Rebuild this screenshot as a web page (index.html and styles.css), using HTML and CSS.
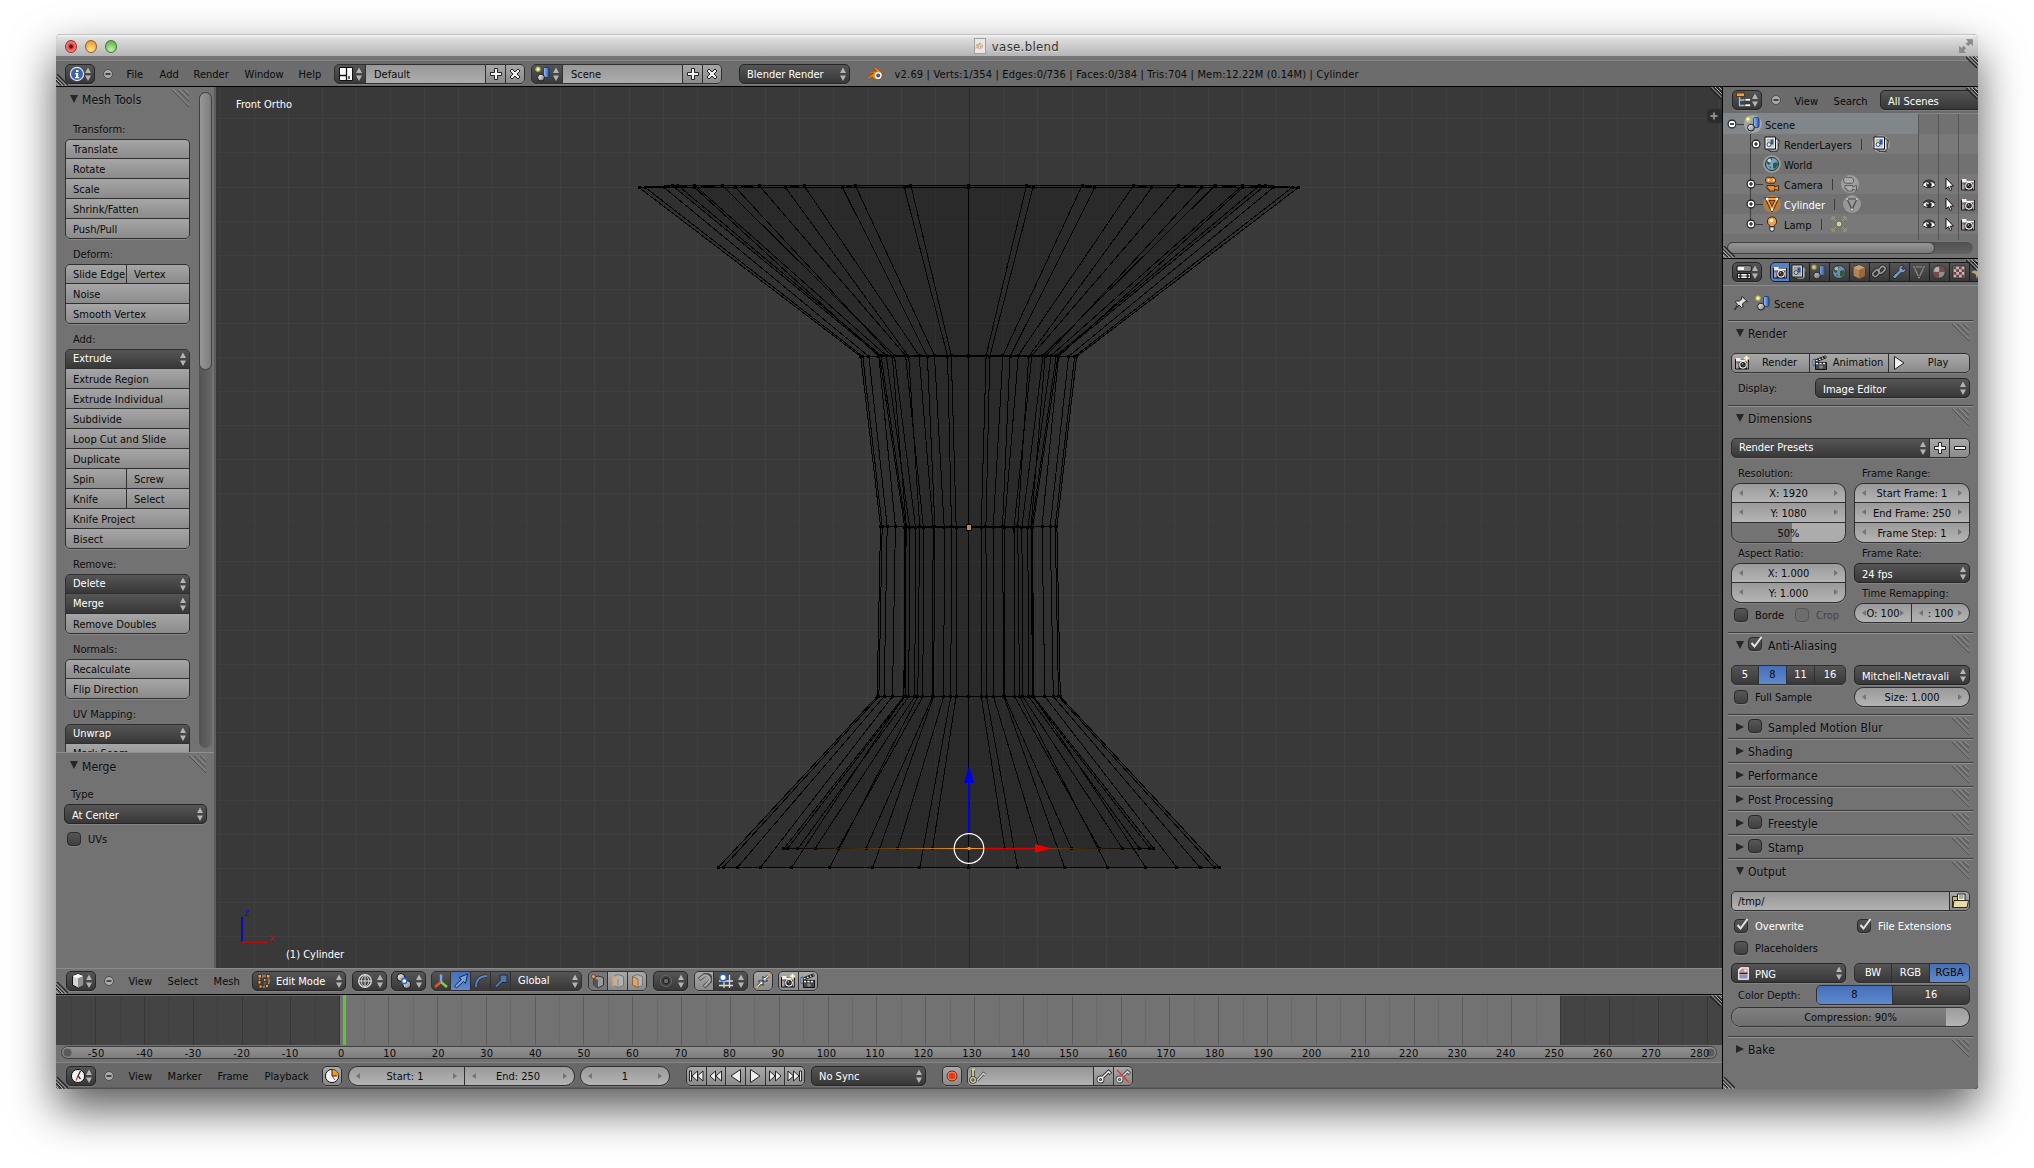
FILE: index.html
```html
<!DOCTYPE html>
<html lang="en">
<head>
<meta charset="utf-8">
<title>vase.blend</title>
<link rel="stylesheet" href="styles.css">
</head>
<body>
<svg class="defs" aria-hidden="true">
  <defs>
    <linearGradient id="gBall" x1="0" y1="0" x2="1" y2="1"><stop offset="0" stop-color="#fff"/><stop offset="1" stop-color="#777"/></linearGradient>
    <linearGradient id="gBlue" x1="0" y1="0" x2="1" y2="0"><stop offset="0" stop-color="#9cc3f5"/><stop offset="1" stop-color="#2757b5"/></linearGradient>
    <symbol id="ud" viewBox="0 0 6 14"><path d="M0 6 3 .5 6 6ZM0 8.5h6L3 14Z" fill="#b4b4b4"/></symbol>
    <symbol id="minus" viewBox="0 0 10 10"><circle cx="5" cy="5" r="4.5" fill="#ababab" stroke="#4d4d4d"/><path d="M2.5 5h5" stroke="#222" stroke-width="1.4"/></symbol>
    <symbol id="expand" viewBox="0 0 10 10"><circle cx="5" cy="5" r="3.9" fill="#fff" stroke="#111" stroke-width="1.1"/><path d="M3 5h4M5 3v4" stroke="#111" stroke-width="1.2"/></symbol>
    <symbol id="collapse" viewBox="0 0 10 10"><circle cx="5" cy="5" r="3.9" fill="#fff" stroke="#111" stroke-width="1.1"/><path d="M3 5h4" stroke="#111" stroke-width="1.3"/></symbol>
    <symbol id="info" viewBox="0 0 16 16"><circle cx="8" cy="8" r="6.6" fill="#3d64a8" stroke="#dfe6f2" stroke-width="1.2"/><path d="M7 4h2.4v2H7ZM6.2 7h3v4h1v1.2H6V11h1V8.2h-.8Z" fill="#fff"/></symbol>
    <symbol id="layout" viewBox="0 0 16 16"><path d="M1.5 1.5h13v13h-13Z" fill="#fff" stroke="#111"/><path d="M8.5 1.5v13M1.5 9.5h7M11 10v3" stroke="#111" stroke-width="1.3"/></symbol>
    <symbol id="plus" viewBox="0 0 16 16"><path d="M6.5 2.5h3v4h4v3h-4v4h-3v-4h-4v-3h4Z" fill="#f2f2f2" stroke="#222"/></symbol>
    <symbol id="dash" viewBox="0 0 16 16"><path d="M2.5 6.5h11v3h-11Z" fill="#f2f2f2" stroke="#222"/></symbol>
    <symbol id="cross" viewBox="0 0 16 16"><path d="M3 5 5 3l3 3 3-3 2 2-3 3 3 3-2 2-3-3-3 3-2-2 3-3Z" fill="#eee" stroke="#222"/></symbol>
    <symbol id="scene" viewBox="0 0 16 16"><path d="M8.5 2.5c0-1.4 5.5-1.4 5.5 0v8c0 1.5-5.5 1.5-5.5 0Z" fill="url(#gBlue)" stroke="#1c2c4c" stroke-width=".8"/><circle cx="6" cy="11.6" r="3.4" fill="url(#gBall)" stroke="#111" stroke-width=".9"/><circle cx="3" cy="3.2" r="2.6" fill="#d9d45a" opacity=".8"/><circle cx="3" cy="3.2" r="1.2" fill="#ffffc8"/></symbol>
    <symbol id="blender" viewBox="0 0 18 16"><path d="M8.2 1 15 6.2a5.3 5.3 0 1 1-9.6 4.6L1.5 13 .4 11.8 7 7H2.4V5.2h7.4L7.2 2.4Z" fill="#f0891d" stroke="#7e4106" stroke-width=".6"/><circle cx="11.2" cy="9.6" r="3.4" fill="#fff"/><circle cx="11.2" cy="9.6" r="2" fill="#2a5fa8"/></symbol>
    <symbol id="layers" viewBox="0 0 16 16"><path d="M6.5 5.500 15.500 4.500 13 15.500H6Z" fill="#eee" stroke="#222" stroke-width=".8"/><path d="M4 3h10v11H4Z" fill="#e5e5e5" stroke="#222" stroke-width=".8"/><path d="M1 1h10.500v12H1Z" fill="#fff" stroke="#111"/><path d="M2.500 2.500h7.500v9H2.500Z" fill="#b9cbea"/><path d="M6.500 3.500H9.500v5H6.500Z" fill="#2b58ae"/><circle cx="5" cy="8.500" r="1.900" fill="#fff" stroke="#111" stroke-width=".7"/><path d="M3 3h2v2H3Z" fill="#e5b62c"/></symbol>
    <symbol id="world" viewBox="0 0 16 16"><circle cx="8" cy="8" r="6.500" fill="#7ba4cc" stroke="#1c2a3a"/><path d="M4 4c2-2 4-1.500 4.500-1l-1 2-2 1 1 2-2 1-2-2Z M9 7l4-1 1 3-3 4-2-1Z M5 10l2 1-.5 2Z" fill="#2f5f33"/><circle cx="5.500" cy="4.500" r="1.800" fill="#fff" opacity=".75"/></symbol>
    <symbol id="moviecam" viewBox="0 0 16 16"><path d="M3 9.500h7.500v1.500l4-1.500v5l-4-1.500v2H5v-2H3Z M1.500 4a3 3 0 0 1 5-2.200 3 3 0 1 1 3.700 5.500H4.500A3 3 0 0 1 1.500 4Z" fill="#e78b35" stroke="#3f2208" stroke-width=".9"/><circle cx="4.600" cy="4.200" r="1.100" fill="#fff0dd"/><circle cx="9.600" cy="4.200" r="1.100" fill="#fff0dd"/></symbol>
    <symbol id="camdata" viewBox="0 0 16 16"><path d="M3 9.500h7.500v1.500l4-1.500v5l-4-1.500v2H5v-2H3Z M1.500 4a3 3 0 0 1 5-2.200 3 3 0 1 1 3.700 5.500H4.500A3 3 0 0 1 1.500 4Z" fill="#aaa" stroke="#555" stroke-width=".9"/></symbol>
    <symbol id="mesh" viewBox="0 0 16 16"><path d="M3 3h10L8 13.500Z" fill="none" stroke="#4a2505" stroke-width="3.600"/><path d="M3 3h10L8 13.500Z" fill="none" stroke="#f7a04a" stroke-width="1.800"/><path d="M1.800 1.800h2.400v2.400H1.800ZM11.800 1.800h2.400v2.400h-2.400ZM6.800 12.300h2.400v2.400H6.800Z" fill="#fff"/></symbol>
    <symbol id="meshdata" viewBox="0 0 16 16"><path d="M3 3h10L8 13.500Z" fill="none" stroke="#4c4c4c" stroke-width="1.200"/><path d="M1.800 1.800h2.400v2.400H1.800ZM11.800 1.800h2.400v2.400h-2.400ZM6.800 12.300h2.400v2.400H6.800Z" fill="#eee" stroke="#555" stroke-width=".6"/></symbol>
    <symbol id="lamp" viewBox="0 0 16 16"><path d="M8 .8a4.600 4.600 0 0 1 2.500 8.500v1.200h-5V9.300A4.600 4.600 0 0 1 8 .8Z" fill="#f0a050" stroke="#46260a"/><circle cx="7.500" cy="4.500" r="1.800" fill="#fff3dd"/><path d="M5.800 10.800h4.400v2.800L9 15.300H7l-1.200-1.700Z" fill="#ddd" stroke="#222" stroke-width=".9"/></symbol>
    <symbol id="lampdata" viewBox="0 0 16 16"><path d="M1 4V1h3M12 1h3v3M15 12v3h-3M4 15H1v-3M2 2l3 3M14 2l-3 3M2 14l3-3M14 14l-3-3" fill="none" stroke="#a79f68"/><circle cx="8" cy="8" r="3" fill="#cfcda6" stroke="#6d6a4a"/></symbol>
    <symbol id="eye" viewBox="0 0 16 16"><path d="M1.500 9C4 4 12 4 14.500 9 12 12.500 4 12.500 1.500 9Z" fill="#fff" stroke="#222"/><path d="M2 7C5 3 11 3 14 7" fill="none" stroke="#222"/><circle cx="8" cy="8.600" r="2.700" fill="#222"/><circle cx="7" cy="7.600" r=".8" fill="#fff"/></symbol>
    <symbol id="cursor" viewBox="0 0 16 16"><path d="M5 2v11l2.500-2.300 1.700 3.800 1.700-.8-1.700-3.500h3.300Z" fill="#fff" stroke="#111"/></symbol>
    <symbol id="camera" viewBox="0 0 16 16"><path d="M1.500 4.500h13v9.500h-13Z" fill="#333" stroke="#111"/><path d="M2 4.500V3h4.500v1.500h7.500v2H2Z" fill="#eee"/><path d="M2 6.500h2.500v7H2ZM13 6.500h1.200v7H13Z" fill="#a5a5a5"/><circle cx="9" cy="9.800" r="3.300" fill="#222" stroke="#f2f2f2" stroke-width="1.100"/><path d="M7.500 9.500a1.600 1.600 0 0 1 1.600-1.600v1.600Z" fill="#b8c5e0"/><path d="M9.500 10h1.500l-1.500 1.500Z" fill="#d65a4a"/><path d="M2.600 7h1.600v1.500H2.600Z" fill="#d33"/></symbol>
    <symbol id="camnew" viewBox="0 0 16 16"><use href="#camera"/><path d="M12.500.2v6M9.500 3.200h6" stroke="#e6b921" stroke-width="3"/><path d="M12.500 1v4.400M10.300 3.200h4.400" stroke="#fff" stroke-width="1.300"/></symbol>
    <symbol id="clapper" viewBox="0 0 16 16"><path d="M3.500 7.500h11v7h-11Z" fill="#4b4b4b" stroke="#111"/><path d="M3 5 13.500.8l.8 2L3.800 7Z" fill="#fff" stroke="#111" stroke-width=".9"/><path d="M5.500 4l1.300 1.600M8.500 2.800l1.300 1.600M11.300 1.700l1.300 1.600" stroke="#111" stroke-width="1.500"/><path d="M4 8.500h10.500" stroke="#fff" stroke-width="1.600" stroke-dasharray="2 1.500"/><path d="M1 4.500 3 4v6l-2 .5Z" fill="#a9c8ef" stroke="#25406a" stroke-width=".7"/><path d="M9 10v4M7 12h4" stroke="#999"/></symbol>
    <symbol id="play" viewBox="0 0 16 16"><path d="M3.500 1.500v13l9.500-6.500Z" fill="#eee" stroke="#222"/></symbol>
    <symbol id="rplay" viewBox="0 0 16 16"><path d="M12.500 1.500v13L3 8Z" fill="#eee" stroke="#222"/></symbol>
    <symbol id="ff" viewBox="0 0 16 16"><path d="M2.500 3v10L8 8ZM8.500 3v10L14 8Z" fill="#eee" stroke="#222"/></symbol>
    <symbol id="rew" viewBox="0 0 16 16"><path d="M13.500 3v10L8 8ZM7.500 3v10L2 8Z" fill="#eee" stroke="#222"/></symbol>
    <symbol id="tostart" viewBox="0 0 16 16"><path d="M15 3v10L9.500 8ZM9.500 3v10L4 8ZM1.500 3h2v10h-2Z" fill="#eee" stroke="#222"/></symbol>
    <symbol id="toend" viewBox="0 0 16 16"><path d="M1 3v10L6.500 8ZM6.500 3v10L12 8ZM12.500 3h2v10h-2Z" fill="#eee" stroke="#222"/></symbol>
    <symbol id="outliner" viewBox="0 0 16 16"><path d="M3.500 3v10.500H9M3.500 8H9" fill="none" stroke="#8ec1e6" stroke-width="1.300"/><path d="M.5 1h8v3.500h-8Z" fill="#f0a142" stroke="#4a2a07" stroke-width=".8"/><path d="M9 6.500h5.500v2.500H9ZM9 12h5.500v2.500H9Z" fill="#fff" stroke="#222" stroke-width=".6"/></symbol>
    <symbol id="props" viewBox="0 0 16 16"><path d="M1 2h14v5H1Z" fill="#eee" stroke="#111"/><path d="M8 3h6v3H8Z" fill="#888"/><path d="M1.500 9.500h13v5h-13Z" fill="#fff" stroke="#111"/><path d="M5 10.200v3.600L2.500 12ZM11 10.200v3.600l2.500-1.800ZM5 12h6" fill="#222" stroke="#222" stroke-width=".8"/></symbol>
    <symbol id="cube" viewBox="0 0 16 16"><path d="M8 1 13.500 3v9L8 15 2.500 12V3Z" fill="#d5d5d5" stroke="#111"/><path d="M2.500 3 8 5.200 13.500 3 8 1Z" fill="#fff"/><path d="M8 5.200V15l5.500-3V3Z" fill="#8f8f8f"/></symbol>
    <symbol id="ocube" viewBox="0 0 16 16"><path d="M8 1 14 3.500v8.500L8 15 2 12V3.500Z" fill="#d99a5b" stroke="#3b2a1a"/><path d="M2 3.500 8 6l6-2.500L8 1Z" fill="#f0bb86"/><path d="M8 6v9l6-3V3.500Z" fill="#b97438"/></symbol>
    <symbol id="editmode" viewBox="0 0 16 16"><path d="M4 3h9v7l-3 4H4l-1-6Z" fill="none" stroke="#aaa"/><path d="M4 3 9 6h4M9 6v8" stroke="#777" fill="none"/><path d="M2 1.500h3.500V5H2ZM10.500 1.500H14V5h-3.500ZM2 7.500h3V11H2ZM7.500 5.500H10v3H7.500ZM3 12h3v3H3ZM9.500 11.500h3v3h-3Z" fill="#f3a252" stroke="#3b220a" stroke-width=".8"/></symbol>
    <symbol id="wire" viewBox="0 0 16 16"><circle cx="8" cy="8" r="6.300" fill="#444" stroke="#ddd" stroke-width="1.300"/><path d="M8 1.700v12.600M1.700 8h12.600M8 1.700c-5 4-5 9 0 12.600M8 1.700c5 4 5 9 0 12.600" fill="none" stroke="#ddd"/></symbol>
    <symbol id="pivot" viewBox="0 0 16 16"><circle cx="5" cy="4.500" r="4" fill="url(#gBall)" stroke="#111"/><circle cx="10.800" cy="11.500" r="4" fill="url(#gBall)" stroke="#111"/><circle cx="8.300" cy="8" r="2.600" fill="#fff" stroke="#2467c9" stroke-width="1.500"/></symbol>
    <symbol id="axes" viewBox="0 0 16 16"><path d="M8 9V1.500" stroke="#78a8f0" stroke-width="2.400"/><path d="M8 9 2 14" stroke="#e5533c" stroke-width="2.400"/><path d="m8 9 6 5" stroke="#7fce4c" stroke-width="2.400"/></symbol>
    <symbol id="arrow" viewBox="0 0 16 16"><path d="M1.500 13 8.500 6.500 6 4.500 14.500 1 12.500 10.500 10.500 8.500 3.500 15Z" fill="#77a5e8" stroke="#12284e"/></symbol>
    <symbol id="arc" viewBox="0 0 16 16"><path d="M3 14C3 7 7 3 14 3" fill="none" stroke="#182a48" stroke-width="3.500"/><path d="M3 14C3 7 7 3 14 3" fill="none" stroke="#5f83b8" stroke-width="1.800"/></symbol>
    <symbol id="scale" viewBox="0 0 16 16"><path d="M1.500 13 7 7.500V2h7v7.500H9L3.500 15Z" fill="#54769f" stroke="#182a48"/></symbol>
    <symbol id="selv" viewBox="0 0 16 16"><path d="M8 3 13.500 4.500v7.500L8 15 3.500 12V4.500Z" fill="#9b9b9b" stroke="#333"/><path d="M3.500 4.500 8 7v8l-4.500-3Z" fill="#555"/><circle cx="3.500" cy="3.500" r="2" fill="#e9a163" stroke="#50310f" stroke-width=".7"/></symbol>
    <symbol id="sele" viewBox="0 0 16 16"><path d="M8 1.500 13.500 3.500v9L8 14.500 3.500 12V3.500Z" fill="#b3b3b3" stroke="#777"/><path d="M8 6v8" stroke="#888"/><path d="M3.500 3v10" stroke="#e9a163" stroke-width="2"/></symbol>
    <symbol id="self" viewBox="0 0 16 16"><path d="M8 1.500 13.500 3.500v9L8 14.500 3.500 12V3.500Z" fill="#b3b3b3" stroke="#777"/><path d="M3.500 3.500 9 6v8.500L3.500 12Z" fill="#e3a265" stroke="#70491f" stroke-width=".6"/></symbol>
    <symbol id="prop" viewBox="0 0 16 16"><circle cx="8" cy="8" r="5.500" fill="#3b3b3b" stroke="#6c6c6c"/><circle cx="8" cy="8" r="2.700" fill="#6a6a6a" stroke="#222"/></symbol>
    <symbol id="magnet" viewBox="0 0 16 16"><path d="m3 6.500 5-4a4.200 4.200 0 0 1 5.400 6.400L8 14" fill="none" stroke="#4a4a4a" stroke-width="4"/><path d="m3.400 6.200 4.800-3.600a4.200 4.200 0 0 1 5 6L8.500 13.500" fill="none" stroke="#aaa" stroke-width="2.200"/></symbol>
    <symbol id="snapgrid" viewBox="0 0 16 16"><path d="M1 8h14M1 12.500h14M6 2v13M11.500 2v13" stroke="#ddd" stroke-width="1.300"/><circle cx="5" cy="4.500" r="3.300" fill="#fff" stroke="#2467c9" stroke-width="1.600"/></symbol>
    <symbol id="snapto" viewBox="0 0 16 16"><path d="M14.500 3 11 6.500l1.500 1.500H8V3.500L9.500 5 13 1.500ZM3 14.500 6.500 11 8 12.500V8H3.500L5 9.500 1.500 13Z" fill="#fff" stroke="#222"/><path d="M12.500 1h2.500v2.500h-2.500ZM1 12.500h2.500V15H1Z" fill="#eba050"/></symbol>
    <symbol id="clock" viewBox="0 0 16 16"><circle cx="8" cy="8" r="6.600" fill="#f2f2f2" stroke="#111"/><path d="M10.500 3 8 8l2.500 3" fill="none" stroke="#222" stroke-width="1.200"/><path d="m8 8-2 4.500" stroke="#d22" stroke-width="1.100"/></symbol>
    <symbol id="clockpie" viewBox="0 0 16 16"><circle cx="8" cy="8" r="6.600" fill="#f2f2f2" stroke="#111"/><path d="M8 1.500A6.500 6.500 0 0 1 14.500 8H8Z" fill="#f29a1d"/><path d="M8 2v6h5" fill="none" stroke="#222"/><path d="m8 8 3 4" stroke="#d22"/></symbol>
    <symbol id="record" viewBox="0 0 16 16"><circle cx="8" cy="8" r="4.900" fill="#e63a12" stroke="#5a1406" stroke-width=".9"/><circle cx="8" cy="8" r="4" fill="none" stroke="#ff9a7a" stroke-width=".9"/></symbol>
    <symbol id="keys" viewBox="0 0 20 16"><path d="M5 9.500V2" stroke="#333" stroke-width="3.400"/><path d="M5 9.500V1.500h2" fill="none" stroke="#e8df98" stroke-width="1.700"/><circle cx="5" cy="12" r="2.300" fill="none" stroke="#333" stroke-width="3"/><circle cx="5" cy="12" r="2.300" fill="none" stroke="#e8df98" stroke-width="1.300"/><path d="m9.500 12 6-6.500 1.500 1.300" fill="none" stroke="#444" stroke-width="3"/><path d="m9.500 12 6-6.500 1.500 1.300" fill="none" stroke="#ddd" stroke-width="1.300"/></symbol>
    <symbol id="key" viewBox="0 0 16 16"><path d="m6 10 6.500-6.500L15 6" fill="none" stroke="#333" stroke-width="3.400"/><circle cx="4.500" cy="11.500" r="2.300" fill="#999" stroke="#333" stroke-width="3.200"/><path d="m6 10 6.500-6.500L14.500 5.500" fill="none" stroke="#eee" stroke-width="1.500"/><circle cx="4.500" cy="11.500" r="2.300" fill="none" stroke="#eee" stroke-width="1.400"/></symbol>
    <symbol id="keydel" viewBox="0 0 16 16"><use href="#key" opacity=".75"/><path d="m2 2 12 12.500" stroke="#d8423f" stroke-width="1.800"/></symbol>
    <symbol id="link" viewBox="0 0 16 16"><g fill="none" stroke="#222" stroke-width="3.600"><rect x="1.500" y="7" width="7.500" height="4.600" rx="2.300" transform="rotate(-45 5 9.300)"/><rect x="7" y="3.500" width="7.500" height="4.600" rx="2.300" transform="rotate(-45 10.700 5.800)"/></g><g fill="none" stroke="#bbb" stroke-width="1.500"><rect x="1.500" y="7" width="7.500" height="4.600" rx="2.300" transform="rotate(-45 5 9.300)"/><rect x="7" y="3.500" width="7.500" height="4.600" rx="2.300" transform="rotate(-45 10.700 5.800)"/></g></symbol>
    <symbol id="wrench" viewBox="0 0 16 16"><path d="M1.500 12.500 8 6.500c-.8-3 1.700-6 5-5l-2.300 2.600 1.300 1.600 3-1.800c.5 3.200-2.500 5.600-5.200 4.800L4 15Z" fill="#8fb5e6" stroke="#17263b"/></symbol>
    <symbol id="material" viewBox="0 0 16 16"><circle cx="8" cy="8" r="6.300" fill="#a7a7a7" stroke="#222"/><path d="M8 8V1.700A6.300 6.300 0 0 1 14.300 8ZM8 8v6.300A6.300 6.300 0 0 1 1.700 8Z" fill="#8a4b45"/><circle cx="6" cy="5.500" r="2.500" fill="#fff" opacity=".5"/></symbol>
    <symbol id="texture" viewBox="0 0 16 16"><path d="M2 2h12v12H2Z" fill="#e6e0e0" stroke="#222"/><path d="M2.500 2.500h2.700v2.700H2.500ZM8 2.500h2.700v2.700H8ZM5.200 5.200H8V8H5.200ZM10.700 5.200h2.800V8h-2.800ZM2.500 8h2.700v2.700H2.500ZM8 8h2.700v2.700H8ZM5.200 10.700H8v2.800H5.200ZM10.700 10.700h2.800v2.800h-2.800Z" fill="#8e3a3a"/></symbol>
    <symbol id="particles" viewBox="0 0 16 16"><path d="M6 1l1.500 5L13 8 7.500 10 6 15 4.500 10 0 8l4.500-2Z" fill="#d9c98a"/></symbol>
    <symbol id="meshtab" viewBox="0 0 16 16"><path d="M3 3h10L8 13.500Z" fill="none" stroke="#a5a5a5" stroke-width="1.200"/><path d="M1.800 1.800h2.400v2.400H1.800ZM11.800 1.800h2.400v2.400h-2.400ZM6.800 12.300h2.400v2.400H6.800Z" fill="#ccc" stroke="#222" stroke-width=".7"/></symbol>
    <symbol id="pin" viewBox="0 0 16 16"><path d="m9 1.500 5.500 5-1.500.5-1-.5-2.500 2.500.5 3-1.500.5-2.500-2.500L1.500 15l3-5.500L2.500 7l.8-1.200 3 .3L8.800 4 8.500 3Z" fill="#ddd" stroke="#222"/></symbol>
    <symbol id="folder" viewBox="0 0 18 16"><path d="M1.500 3.500h5l1 2v9h-6Z" fill="#c9b77a" stroke="#2e2814"/><path d="M6.500 1h7.500v9H6.500Z" fill="#fff" stroke="#222"/><path d="M8 3h4.500M8 5h4.500" stroke="#555"/><path d="M3 7.500h14.500l-1.500 7H2Z" fill="#e7dba8" stroke="#2e2814"/></symbol>
    <symbol id="image" viewBox="0 0 14 16"><path d="M4 .7h9.300v14.600H.7V4Z" fill="#fff" stroke="#222" stroke-width=".8"/><path d="M5 2.500h6.500V7H2.500V5Z" fill="#d98f86"/><path d="M2.500 7h9v1.800h-9Z" fill="#3a1d1a"/><path d="M2.500 9h9v4.500h-9Z" fill="#8d8fc0"/><circle cx="9" cy="4.800" r="1.200" fill="#fff"/></symbol>
    <symbol id="grip" viewBox="0 0 17 18"><path d="M0 1l17 17M5.500 1 17 12.500M11 1l6 6" stroke="#4f4f4f" stroke-width="1"/><path d="M1 0l16 16.500M7 0l10 10.500M12.500 0 17 4.500" stroke="#929292" stroke-width=".8"/></symbol>
    <symbol id="corner" viewBox="0 0 12 12"><path d="M0 1l11 11M3.500 1l8.500 8.500M7 1l5 5" stroke="#222" stroke-width="1.300"/><path d="M1.500 0 12 10.500M5 0l7 7M9 0l3 3" stroke="#b0b0b0" stroke-width="1"/></symbol>
    <symbol id="full" viewBox="0 0 14 14"><path d="M7.500.5h6v6l-2-2L9.300 6.800 7.200 4.700 9.500 2.500ZM6.500 13.500h-6v-6l2 2 2.200-2.300 2.100 2.100-2.300 2.200Z" fill="#8b8b8b" stroke="#777" stroke-width=".5"/></symbol>
    <symbol id="check" viewBox="0 0 16 16"><path d="m3.500 7 3 3.500L13.500 1" fill="none" stroke="#e6e6e6" stroke-width="2"/></symbol>
  </defs>
</svg>

<div class="window">
  <div class="titlebar">
    <div class="lights"><i class="light red"></i><i class="light yellow"></i><i class="light green"></i></div>
    <div class="doc"><span class="docicon"><svg viewBox="0 0 18 16"><use href="#blender"/></svg></span>vase.blend</div>
    <svg class="fullscreen"><use href="#full"/></svg>
  </div>

  <header class="header info">
    <div class="dark pair"><svg class="ic"><use href="#info"/></svg><svg class="ud"><use href="#ud"/></svg></div>
    <svg class="mini"><use href="#minus"/></svg>
    <span>File</span><span>Add</span><span>Render</span><span>Window</span><span>Help</span>
    <div class="idblock"><div class="darkcell"><svg class="ic"><use href="#layout"/></svg><svg class="ud"><use href="#ud"/></svg></div><div class="field">Default</div><div class="lightcell"><svg class="ic"><use href="#plus"/></svg></div><div class="lightcell"><svg class="ic"><use href="#cross"/></svg></div></div>
    <div class="idblock"><div class="darkcell"><svg class="ic"><use href="#scene"/></svg><svg class="ud"><use href="#ud"/></svg></div><div class="field">Scene</div><div class="lightcell"><svg class="ic"><use href="#plus"/></svg></div><div class="lightcell"><svg class="ic"><use href="#cross"/></svg></div></div>
    <div class="dark menu engine">Blender Render<svg class="ud"><use href="#ud"/></svg></div>
    <svg class="logo"><use href="#blender"/></svg>
    <span class="stats">v2.69 | Verts:1/354 | Edges:0/736 | Faces:0/384 | Tris:704 | Mem:12.22M (0.14M) | Cylinder</span>
    <svg class="corner tr"><use href="#corner"/></svg>
    <svg class="corner bl"><use href="#corner"/></svg>
  </header>

  <div class="body">
    <div class="left">
      <div class="view3d">
        <aside class="tools">
          <div class="shelf">
            <div class="ptitle open">Mesh Tools<svg class="grip"><use href="#grip"/></svg></div>
            <div class="toolcol">
              <div class="lbl tall">Transform:</div>
              <div class="stack"><div>Translate</div><div>Rotate</div><div>Scale</div><div>Shrink/Fatten</div><div>Push/Pull</div></div>
              <div class="lbl tall">Deform:</div>
              <div class="stack"><div class="split"><b>Slide Edge</b><b>Vertex</b></div><div>Noise</div><div>Smooth Vertex</div></div>
              <div class="lbl tall">Add:</div>
              <div class="stack"><div class="mn">Extrude<svg class="ud"><use href="#ud"/></svg></div><div>Extrude Region</div><div>Extrude Individual</div><div>Subdivide</div><div>Loop Cut and Slide</div><div>Duplicate</div><div class="split"><b>Spin</b><b>Screw</b></div><div class="split"><b>Knife</b><b>Select</b></div><div>Knife Project</div><div>Bisect</div></div>
              <div class="lbl tall">Remove:</div>
              <div class="stack"><div class="mn">Delete<svg class="ud"><use href="#ud"/></svg></div><div class="mn">Merge<svg class="ud"><use href="#ud"/></svg></div><div>Remove Doubles</div></div>
              <div class="lbl tall">Normals:</div>
              <div class="stack"><div>Recalculate</div><div>Flip Direction</div></div>
              <div class="lbl tall">UV Mapping:</div>
              <div class="stack"><div class="mn">Unwrap<svg class="ud"><use href="#ud"/></svg></div><div class="cut">Mark Seam</div></div>
            </div>
            <div class="vscroll"><i></i></div>
          </div>
          <div class="operator">
            <div class="ptitle open">Merge<svg class="grip"><use href="#grip"/></svg></div>
            <div class="lbl tall">Type</div>
            <div class="dark menu">At Center<svg class="ud"><use href="#ud"/></svg></div>
            <div class="chk"><i class="box"></i>UVs</div>
          </div>
        </aside>
        <svg class="viewport" id="viewport" viewBox="216 87 1506 881"></svg>
        <div class="regiontab"><svg><path d="M3.500 7h7M7 3.500v7" stroke="#8c8c8c" stroke-width="2"/></svg></div>
        <svg class="corner tr"><use href="#corner"/></svg>
      </div>

      <header class="header v3d">
        <div class="dark pair"><svg class="ic"><use href="#cube"/></svg><svg class="ud"><use href="#ud"/></svg></div>
        <svg class="mini"><use href="#minus"/></svg>
        <span>View</span><span>Select</span><span>Mesh</span>
        <div class="dark menu mode"><svg class="ic"><use href="#editmode"/></svg>Edit Mode<svg class="ud"><use href="#ud"/></svg></div>
        <div class="dark pair wide"><svg class="ic"><use href="#wire"/></svg><svg class="ud"><use href="#ud"/></svg></div>
        <div class="dark pair wide"><svg class="ic"><use href="#pivot"/></svg><svg class="ud"><use href="#ud"/></svg></div>
        <div class="row manip"><div class="d"><svg class="ic"><use href="#axes"/></svg></div><div class="on"><svg class="ic"><use href="#arrow"/></svg></div><div class="d"><svg class="ic"><use href="#arc"/></svg></div><div class="d"><svg class="ic"><use href="#scale"/></svg></div><div class="d text">Global<svg class="ud"><use href="#ud"/></svg></div></div>
        <div class="row selmode"><div class="p"><svg class="ic"><use href="#selv"/></svg></div><div><svg class="ic"><use href="#sele"/></svg></div><div><svg class="ic"><use href="#self"/></svg></div></div>
        <div class="dark pair wide"><svg class="ic"><use href="#prop"/></svg><svg class="ud"><use href="#ud"/></svg></div>
        <div class="row snap"><div><svg class="ic"><use href="#magnet"/></svg></div><div class="d"><svg class="ic"><use href="#snapgrid"/></svg><svg class="ud"><use href="#ud"/></svg></div></div>
        <div class="row one"><div><svg class="ic"><use href="#snapto"/></svg></div></div>
        <div class="row two"><div><svg class="ic"><use href="#camnew"/></svg></div><div><svg class="ic"><use href="#clapper"/></svg></div></div>
        <svg class="corner bl"><use href="#corner"/></svg>
      </header>

      <div class="timeline"><svg id="timeline" viewBox="56 995 1666 67"></svg><svg class="corner tr"><use href="#corner"/></svg></div>

      <header class="header time">
        <div class="dark pair"><svg class="ic"><use href="#clock"/></svg><svg class="ud"><use href="#ud"/></svg></div>
        <svg class="mini"><use href="#minus"/></svg>
        <span>View</span><span>Marker</span><span>Frame</span><span>Playback</span>
        <div class="row one"><div><svg class="ic"><use href="#clockpie"/></svg></div></div>
        <div class="nums range"><div>Start: 1</div><div>End: 250</div></div>
        <div class="nums current"><div>1</div></div>
        <div class="row transport"><div><svg class="ic"><use href="#tostart"/></svg></div><div><svg class="ic"><use href="#rew"/></svg></div><div><svg class="ic"><use href="#rplay"/></svg></div><div><svg class="ic"><use href="#play"/></svg></div><div><svg class="ic"><use href="#ff"/></svg></div><div><svg class="ic"><use href="#toend"/></svg></div></div>
        <div class="dark menu sync">No Sync<svg class="ud"><use href="#ud"/></svg></div>
        <div class="row one"><div><svg class="ic"><use href="#record"/></svg></div></div>
        <div class="row keying"><div class="f"><svg class="keys"><use href="#keys"/></svg></div><div><svg class="ic"><use href="#key"/></svg></div><div><svg class="ic"><use href="#keydel"/></svg></div></div>
        <svg class="corner bl"><use href="#corner"/></svg>
      </header>
    </div>

    <div class="right">
      <section class="outliner">
        <header class="header outl">
          <div class="dark pair"><svg class="ic"><use href="#outliner"/></svg><svg class="ud"><use href="#ud"/></svg></div>
          <svg class="mini"><use href="#minus"/></svg>
          <span>View</span><span>Search</span>
          <div class="dark menu scenes">All Scenes</div>
          <svg class="corner tr"><use href="#corner"/></svg>
        </header>
        <div class="tree">
          <div class="trow sel"><svg class="exp"><use href="#collapse"/></svg><i class="wire w10"></i><span class="halo"><svg class="ic"><use href="#scene"/></svg></span><span>Scene</span></div>
          <div class="trow l1"><svg class="exp"><use href="#expand"/></svg><span class="halo none"><svg class="ic"><use href="#layers"/></svg></span><span class="name">RenderLayers</span><i class="bar"></i><span class="halo"><svg class="ic"><use href="#layers"/></svg></span></div>
          <div class="trow l2"><span class="halo"><svg class="ic"><use href="#world"/></svg></span><span class="name">World</span></div>
          <div class="trow l3"><svg class="exp"><use href="#expand"/></svg><i class="wire"></i><span class="halo none"><svg class="ic"><use href="#moviecam"/></svg></span><span class="name">Camera</span><i class="bar"></i><span class="halo"><svg class="ic"><use href="#camdata"/></svg></span><span class="toggles"><svg class="ic"><use href="#eye"/></svg><svg class="ic"><use href="#cursor"/></svg><svg class="ic"><use href="#camera"/></svg></span></div>
          <div class="trow l3"><svg class="exp"><use href="#expand"/></svg><i class="wire"></i><span class="halo orange"><svg class="ic"><use href="#mesh"/></svg></span><span class="name white">Cylinder</span><i class="bar"></i><span class="halo"><svg class="ic"><use href="#meshdata"/></svg></span><span class="toggles"><svg class="ic"><use href="#eye"/></svg><svg class="ic"><use href="#cursor"/></svg><svg class="ic"><use href="#camera"/></svg></span></div>
          <div class="trow l3"><svg class="exp"><use href="#expand"/></svg><i class="wire"></i><span class="halo none"><svg class="ic"><use href="#lamp"/></svg></span><span class="name">Lamp</span><i class="bar"></i><span class="halo none"><svg class="ic"><use href="#lampdata"/></svg></span><span class="toggles"><svg class="ic"><use href="#eye"/></svg><svg class="ic"><use href="#cursor"/></svg><svg class="ic"><use href="#camera"/></svg></span></div>
          <i class="branch"></i>
        </div>
        <div class="hscroll"><i></i></div>
        <svg class="corner bl"><use href="#corner"/></svg>
      </section>

      <section class="properties">
        <header class="header prop">
          <div class="dark pair"><svg class="ic"><use href="#props"/></svg><svg class="ud"><use href="#ud"/></svg></div>
          <div class="tabs"><div class="on"><svg class="ic"><use href="#camera"/></svg></div><div><svg class="ic"><use href="#layers"/></svg></div><div><svg class="ic"><use href="#scene"/></svg></div><div><svg class="ic"><use href="#world"/></svg></div><div><svg class="ic"><use href="#ocube"/></svg></div><div><svg class="ic"><use href="#link"/></svg></div><div><svg class="ic"><use href="#wrench"/></svg></div><div><svg class="ic"><use href="#meshtab"/></svg></div><div><svg class="ic"><use href="#material"/></svg></div><div><svg class="ic"><use href="#texture"/></svg></div><div><svg class="ic"><use href="#particles"/></svg></div></div>
          <svg class="corner tr"><use href="#corner"/></svg>
        </header>
        <div class="context"><svg class="ic"><use href="#pin"/></svg><svg class="ic"><use href="#scene"/></svg><span>Scene</span></div>

        <div class="panel p-render">
          <div class="ptitle open">Render<svg class="grip"><use href="#grip"/></svg></div>
          <div class="pbody">
            <div class="row renderops"><div><svg class="ic"><use href="#camnew"/></svg><span>Render</span></div><div><svg class="ic"><use href="#clapper"/></svg><span>Animation</span></div><div><svg class="ic"><use href="#play"/></svg><span>Play</span></div></div>
            <div class="display"><div class="lbl">Display:</div><div class="dark menu">Image Editor<svg class="ud"><use href="#ud"/></svg></div></div>
          </div>
        </div>

        <div class="panel p-dim">
          <div class="ptitle open">Dimensions<svg class="grip"><use href="#grip"/></svg></div>
          <div class="pbody">
            <div class="row presets"><div class="d text">Render Presets<svg class="ud"><use href="#ud"/></svg></div><div><svg class="ic"><use href="#plus"/></svg></div><div><svg class="ic"><use href="#dash"/></svg></div></div>
            <div class="cols">
              <div>
                <div class="lbl tall">Resolution:</div>
                <div class="nums v v3"><div>X: 1920</div><div>Y: 1080</div><div class="slider half">50%</div></div>
                <div class="lbl">Aspect Ratio:</div>
                <div class="nums v v2"><div>X: 1.000</div><div>Y: 1.000</div></div>
                <div class="chkpair"><div class="chk"><i class="box"></i>Borde</div><div class="chk off"><i class="box"></i>Crop</div></div>
              </div>
              <div>
                <div class="lbl tall">Frame Range:</div>
                <div class="nums v v3"><div>Start Frame: 1</div><div>End Frame: 250</div><div>Frame Step: 1</div></div>
                <div class="lbl">Frame Rate:</div>
                <div class="dark menu">24 fps<svg class="ud"><use href="#ud"/></svg></div>
                <div class="lbl">Time Remapping:</div>
                <div class="nums remap"><div>O: 100</div><div>: 100</div></div>
              </div>
            </div>
          </div>
        </div>

        <div class="panel p-aa">
          <div class="ptitle open"><i class="box on"><svg><use href="#check"/></svg></i>Anti-Aliasing<svg class="grip"><use href="#grip"/></svg></div>
          <div class="pbody cols">
            <div>
              <div class="row samples"><div class="d">5</div><div class="on">8</div><div class="d">11</div><div class="d">16</div></div>
              <div class="chk fs"><i class="box"></i>Full Sample</div>
            </div>
            <div>
              <div class="dark menu">Mitchell-Netravali<svg class="ud"><use href="#ud"/></svg></div>
              <div class="nums size"><div>Size: 1.000</div></div>
            </div>
          </div>
        </div>

        <div class="panel"><div class="ptitle"><i class="box"></i>Sampled Motion Blur<svg class="grip"><use href="#grip"/></svg></div></div>
        <div class="panel"><div class="ptitle">Shading<svg class="grip"><use href="#grip"/></svg></div></div>
        <div class="panel"><div class="ptitle">Performance<svg class="grip"><use href="#grip"/></svg></div></div>
        <div class="panel"><div class="ptitle">Post Processing<svg class="grip"><use href="#grip"/></svg></div></div>
        <div class="panel"><div class="ptitle"><i class="box"></i>Freestyle<svg class="grip"><use href="#grip"/></svg></div></div>
        <div class="panel"><div class="ptitle"><i class="box"></i>Stamp<svg class="grip"><use href="#grip"/></svg></div></div>

        <div class="panel p-out">
          <div class="ptitle open">Output<svg class="grip"><use href="#grip"/></svg></div>
          <div class="pbody">
            <div class="row path"><div class="f">/tmp/</div><div><svg class="folder"><use href="#folder"/></svg></div></div>
            <div class="cols checks"><div class="chk white"><i class="box on"><svg><use href="#check"/></svg></i>Overwrite</div><div class="chk white"><i class="box on"><svg><use href="#check"/></svg></i>File Extensions</div></div>
            <div class="chk ph"><i class="box"></i>Placeholders</div>
            <div class="cols fmt"><div class="dark menu"><svg class="image"><use href="#image"/></svg>PNG<svg class="ud"><use href="#ud"/></svg></div><div class="row modes"><div class="d">BW</div><div class="d">RGB</div><div class="on">RGBA</div></div></div>
            <div class="depth"><div class="lbl">Color Depth:</div><div class="row"><div class="on">8</div><div class="d">16</div></div></div>
            <div class="nums comp"><div class="slider ninety">Compression: 90%</div></div>
          </div>
        </div>
        <div class="panel p-bake"><div class="ptitle">Bake<svg class="grip"><use href="#grip"/></svg></div></div>
        <svg class="corner bl"><use href="#corner"/></svg>
      </section>
    </div>
  </div>
</div>
<script src="script.js"></script>
</body>
</html>
```
FILE: styles.css
```css
* { box-sizing: border-box; }
body {
  margin: 0;
  height: 1168px;
  overflow: hidden;
  background: #fff;
  font-family: "DejaVu Sans Condensed", "DejaVu Sans", sans-serif;
  font-stretch: condensed;
  font-size: 11px;
  color: #0a0a0a;
  white-space: nowrap;
}
.defs { position: absolute; width: 0; height: 0; }
svg { display: block; flex: none; }
i { font-style: normal; }
b { font-weight: normal; }

.window {
  width: 1922px;
  height: 1055px;
  margin: 34px 0 0 56px;
  border-radius: 5px 5px 4px 4px;
  overflow: hidden;
  background: #727272;
}
body::before {
  content: "";
  position: absolute;
  z-index: -1;
  left: 56px;
  top: 34px;
  width: 1922px;
  height: 1055px;
  border-radius: 5px;
  box-shadow: 0 20px 45px rgba(0, 0, 0, .65);
}

/* title bar */
.titlebar {
  height: 22px;
  display: grid;
  grid-template-columns: 1fr auto 1fr;
  align-items: center;
  padding: 1px 5px 0 9px;
  background: linear-gradient(#f4f4f4, #dedede 15%, #b5b5b5);
  border-top: 1px solid #c5c5c5;
}
.lights { display: flex; gap: 8px; }
.light { width: 12px; height: 13px; border-radius: 50%; border: 1px solid #555; }
.red { background: radial-gradient(circle at 50% 50%, #6b0508 1.500px, #e4464a 2.500px, #f6a0a0 6px); border-color: #8d2c2c; }
.yellow { background: radial-gradient(circle at 50% 80%, #ffe48a, #f1a53a 70%); border-color: #8b602a; }
.green { background: radial-gradient(circle at 50% 80%, #c8f0a8, #6fbd57 70%); border-color: #44763a; }
.doc { display: flex; align-items: center; gap: 6px; margin-right: 5px; font-size: 13px; letter-spacing: .35px; color: #333; text-shadow: 0 1px #ddd; }
.docicon { width: 12px; height: 16px; background: #e8e8e8; border: 1px solid #a0a0a0; display: grid; place-items: center; }
.docicon svg { width: 9px; height: 8px; opacity: .55; }
.fullscreen { width: 14px; height: 14px; justify-self: end; }

/* headers */
.header {
  position: relative;
  display: grid;
  align-items: center;
  background: #6b6b6b;
  overflow: hidden;
}
.header > span { padding: 2px 0 0 .6px; }
.header > .stats { letter-spacing: .165px; }
.info {
  height: 31px;
  padding: 5px 0 0 9px;
  grid-template-columns: 38px 23px 33px 34px 51px 54px 36px 197px 208px 128px 27px 1fr;
  background: linear-gradient(#767676 4px, #858585 4px, #858585 5px, #6c6c6c 5px);
  border-bottom: 1px solid #000;
}
.v3d {
  height: 27px;
  padding: 0 0 1px 10px;
  grid-template-columns: 38px 24px 39px 46px 39px 100px 39px 40px 157px 65px 41px 59px 25px 1fr;
  background: linear-gradient(#8a8a8a 1px, #727272 1px);
  border-bottom: 1px solid #000;
}
.time {
  height: 27px;
  padding: 0 0 0 10px;
  grid-template-columns: 38px 24px 39px 50px 47px 58px 26px 232px 106px 125px 131px 25px 1fr;
  background: linear-gradient(#858585 1px, #686868 1px, #686868 25px, #505050 26px);
}
.ic { width: 16px; height: 16px; }
.ud { width: 6px; height: 14px; }
.mini { width: 10px; height: 10px; }
.logo { width: 18px; height: 16px; }

.dark {
  height: 20px;
  border: 1px solid #262626;
  border-radius: 5px;
  background: linear-gradient(#555, #383838);
  box-shadow: 0 1px 0 rgba(255, 255, 255, .12);
  color: #fff;
}
.pair { width: 30px; display: flex; align-items: center; justify-content: space-between; padding: 0 3px; }
.pair.wide { width: 35px; padding-left: 4px; }
.menu { display: flex; align-items: center; padding: 2px 3px 0 7px; }
.menu .ud, .menu .ic { margin-top: -2px; }
.menu .ud { margin-left: auto; }
.engine { width: 111px; }
.mode { width: 94px; padding-left: 3px; }
.mode .ic { margin-right: 4px; }
.sync { width: 115px; }

.idblock, .row {
  display: grid;
  height: 20px;
  border: 1px solid #303030;
  border-radius: 5px;
  overflow: hidden;
  box-shadow: 0 1px 0 rgba(255, 255, 255, .12);
  background: #303030;
}
.idblock { width: 191px; grid-template-columns: 30px 119px 19px 18px; gap: 1px; }
.darkcell { display: flex; align-items: center; justify-content: space-between; padding: 0 3px; background: linear-gradient(#555, #383838); }
.field { padding: 2px 0 0 8px; line-height: 16px; background: linear-gradient(#989898, #adadad); }
.lightcell { display: grid; place-items: center; background: linear-gradient(#a6a6a6, #8b8b8b); }

.row { gap: 1px; justify-content: start; }
.row > div { display: flex; align-items: center; justify-content: center; background: linear-gradient(#a8a8a8, #8b8b8b); min-width: 0; overflow: hidden; }
.row > .d { background: linear-gradient(#555, #383838); color: #fff; }
.row > .p { background: #777; }
.row > .on { background: linear-gradient(#456fb6, #6089cf); }
.row > .f { background: linear-gradient(#959595, #b2b2b2); justify-content: flex-start; }
.row > .text { justify-content: space-between; padding: 0 3px 0 7px; line-height: 20px; }
.manip { width: 151px; grid-template-columns: 18px 19px 19px 19px 1fr; justify-content: stretch; }
.selmode { width: 59px; grid-template-columns: 18px 19px 1fr; justify-content: stretch; }
.snap { width: 54px; grid-template-columns: 18px 1fr; justify-content: stretch; }
.row.snap > .d { justify-content: space-between; padding: 0 3px 0 4px; }
.one { width: 20px; grid-template-columns: 1fr; justify-content: stretch; }
.two { width: 40px; grid-template-columns: 1fr 1fr; justify-content: stretch; }
.transport { width: 119px; grid-template-columns: repeat(6, 1fr); justify-content: stretch; }
.keying { width: 166px; grid-template-columns: 125px 19px 1fr; justify-content: stretch; }
.keys { width: 20px; height: 16px; }

/* number fields */
.nums {
  display: grid;
  height: 20px;
  grid-auto-flow: column;
  gap: 1px;
  border: 1px solid #303030;
  border-radius: 9.500px;
  overflow: hidden;
  background: #303030;
  box-shadow: 0 1px 0 rgba(255, 255, 255, .12);
}
.nums > div {
  position: relative;
  text-align: center;
  line-height: 20px;
  height: 100%;
  min-height: 0;
  overflow: hidden;
  background: linear-gradient(#9a9a9a, #b4b4b4);
}
.nums > div::before, .nums > div::after {
  content: "";
  position: absolute;
  top: 6px;
  border: 3.500px solid transparent;
}
.nums > div::before { left: 4px; border-right: 4px solid #747474; }
.nums > div::after { right: 4px; border-left: 4px solid #747474; }
.nums > .slider::before, .nums > .slider::after { display: none; }
.nums > .half { background: linear-gradient(90deg, #747474 53%, #acacac 53%); }
.nums > .ninety { background: linear-gradient(#808080, #6d6d6d) 0 0 / 90.300% 100% no-repeat, linear-gradient(#9c9c9c, #b4b4b4); }
.v { grid-auto-flow: row; grid-template-rows: 18px; grid-auto-rows: 19px; }
.v > div + div { line-height: 22px; }
.v3 { height: 60px; }
.v2 { height: 40px; }
.range { width: 227px; grid-template-columns: 115px 1fr; }
.range > div { padding-right: 3px; }
.current { width: 90px; }
.remap { grid-template-columns: 56px 1fr; }

/* work area */
.body { display: grid; grid-template-columns: 1666px 255px; gap: 1px; background: #000; height: 1002px; }
.left { height: 1002px; }
.view3d { position: relative; display: grid; grid-template-columns: 160px 1506px; height: 881px; }
.viewport { width: 1506px; height: 881px; background: #393939; }
.regiontab { position: absolute; right: 0; top: 22px; width: 15px; height: 14px; border-radius: 4px 0 0 4px; background: #2c2c2c; }
.regiontab svg { width: 14px; height: 14px; }
.timeline { position: relative; height: 67px; }
.timeline svg:first-child { width: 1666px; height: 67px; }

/* tool shelf */
.tools { background: #727272; border-right: 2px solid #5e5e5e; box-shadow: inset 1px 0 #808080; overflow: hidden; }
.shelf { height: 665px; display: grid; grid-template: 27px 638px / 143px 13px; overflow: hidden; }
.toolcol { padding-left: 9px; width: 134px; height: 638px; overflow: hidden; }
.ptitle {
  position: relative;
  display: flex;
  align-items: center;
  height: 24px;
  padding: 2px 4px 0 20px;
  font-size: 12px;
  letter-spacing: .12px;
  text-shadow: 0 1px rgba(255, 255, 255, .12);
}
.ptitle::before {
  content: "";
  position: absolute;
  left: 8px;
  top: 8px;
  border: 4px solid transparent;
  border-left: 8px solid #262626;
  border-right: 0;
}
.ptitle.open::before { border: 4px solid transparent; border-top: 8px solid #262626; border-bottom: 0; }
.grip { width: 17px; height: 18px; position: absolute; right: 4px; top: 2px; }
.shelf .ptitle { height: 27px; padding: 0 0 1px 26px; }
.shelf .ptitle::before, .operator .ptitle::before { left: 14px; }
.shelf .grip { right: 10px; top: 2px; }
.vscroll { grid-column: 2; grid-row: 1 / 3; margin: 5px 0 4px; border-radius: 7px; background: linear-gradient(90deg, #535353, #666); }
.vscroll i { display: block; height: 278px; border: 1px solid #404040; border-radius: 7px; background: linear-gradient(90deg, #979797, #7c7c7c); }
.lbl { height: 20px; line-height: 22px; padding-left: 7px; text-shadow: 0 1px rgba(255, 255, 255, .12); }
.lbl.tall { height: 25px; line-height: 32px; padding-left: 8px; }
.stack {
  display: grid;
  grid-template-rows: 18px;
  grid-auto-rows: 19px;
  gap: 1px;
  width: 125px;
  border: 1px solid #303030;
  border-radius: 5px;
  background: #303030;
  overflow: hidden;
  box-shadow: 0 1px 0 rgba(255, 255, 255, .15);
}
.stack > div { min-height: 0; line-height: 20px; padding-left: 7px; overflow: hidden; background: linear-gradient(#a6a6a6, #8b8b8b); }
.stack > div + div { line-height: 21px; }
.stack > .mn { display: flex; justify-content: space-between; align-items: center; padding-right: 3px; color: #fff; background: linear-gradient(#555, #383838); }
.stack > .split { display: grid; grid-template-columns: 60px 1fr; padding: 0; }
.stack > .cut { line-height: 19px; }
.split b { padding-left: 7px; }
.split b + b { border-left: 1px solid #303030; }
.operator { height: 216px; border-top: 1px solid #909090; padding-left: 8px; background: #727272; position: relative; }
.operator .ptitle { height: 26px; padding: 1px 0 0 18px; margin-left: 0; }
.operator .ptitle::before { left: 6px; }
.operator .grip { right: 8px; }
.operator .lbl { padding-left: 7px; }
.operator .menu { width: 143px; }
.operator .chk { margin: 8px 0 0 3px; }

.box { width: 14px; height: 14px; border: 1px solid #2b2b2b; border-radius: 4px; background: linear-gradient(#565656, #3f3f3f); flex: none; box-shadow: 0 1px rgba(255, 255, 255, .12); }
.box svg { width: 16px; height: 16px; margin: -2px 0 0 -1px; overflow: visible; }
.chk { display: flex; align-items: center; height: 14px; gap: 7px; line-height: 17px; }
.chk.white { color: #fff; }
.chk.off { color: #444; }
.chk.off .box { opacity: .4; background: #666; }

.corner { position: absolute; width: 12px; height: 12px; }
.corner.tr { right: 0; top: 0; }
.corner.bl { left: 0; bottom: 0; transform: rotate(180deg); }

/* outliner */
.right { display: grid; grid-template-columns: 255px; grid-template-rows: 171px 830px; gap: 1px; background: #000; }
.outliner { position: relative; background: #727272; overflow: hidden; }
.outl { height: 27px; padding-left: 9px; grid-template-columns: 39px 23px 39px 47px 98px; border-bottom: 1px solid #858585; }
.scenes { width: 110px; border-radius: 5px 0 0 5px; }
.tree { position: relative; height: 126px; background:
  linear-gradient(#565656, #565656) 195px 0 / 1px 100% no-repeat,
  linear-gradient(#565656, #565656) 215px 0 / 1px 100% no-repeat,
  linear-gradient(#565656, #565656) 235px 0 / 1px 100% no-repeat,
  repeating-linear-gradient(#717171 0 20px, #797979 20px 40px); }
.trow { position: relative; display: flex; align-items: center; height: 20px; padding-left: 4px; }
.trow.sel { background: linear-gradient(#80868a, #80868a) 0 0 / 195px 20px no-repeat; }
.trow > span:not(.halo):not(.toggles) { padding-top: 2px; margin-left: 3px; }
.exp { width: 10px; height: 10px; }
.wire { width: 9px; height: 1px; background: #3a3a3a; }
.w10 { width: 7px; }
.halo { width: 18px; height: 18px; border-radius: 50%; background: rgba(255, 255, 255, .28); display: grid; place-items: center; }
.halo.none { background: none; }
.halo.orange { background: #b07c45; }
.l1 { padding-left: 28px; }
.l1 .halo { margin-left: 2px; }
.l2 { padding-left: 40px; }
.l3 { padding-left: 23px; }
.l3 .wire { width: 7px; }
.bar { width: 1px; height: 11px; background: #3c3c3c; margin: 0 8px 0 9px; }
.white { color: #fff; }
.toggles { position: absolute; left: 198px; top: 2px; display: flex; gap: 3.500px; }
.branch { position: absolute; left: 27px; top: 20px; width: 1px; height: 90px; background: #3a3a3a; z-index: 0; }
.trow .exp { position: relative; z-index: 1; }
.hscroll { margin: 2px 5px 0 4px; height: 12px; border-radius: 6px; background: linear-gradient(#4f4f4f, #636363); }
.hscroll i { display: block; width: 208px; height: 12px; border: 1px solid #404040; border-radius: 6px; background: linear-gradient(#959595, #7a7a7a); }

/* properties */
.properties { position: relative; background: #727272; overflow: hidden; }
.prop { height: 27px; padding-left: 9px; grid-template-columns: 38px 208px; border-bottom: 1px solid #8a8a8a; }
.tabs { display: grid; grid-template-columns: 18px repeat(10, 19px); gap: 1px; height: 20px; width: 219px; border: 1px solid #1c1c1c; border-radius: 5px 0 0 5px; overflow: hidden; background: #1c1c1c; }
.tabs div { display: grid; place-items: center; background: linear-gradient(#555, #3a3a3a); }
.tabs div .ic { opacity: .75; margin-right: 1px; }
.tabs .on { background: #5580c8; }
.tabs .on .ic { opacity: 1; margin-right: 0; }
.context { display: flex; align-items: center; height: 34px; padding: 0 0 0 10px; gap: 6px; }
.context span { padding-top: 2px; margin-left: -3px; }
.panel { height: 24px; margin: 0 5px; border-top: 1px solid #3c3c3c; box-shadow: inset 0 1px #949494; }
.panel .ptitle { height: 23px; }
.panel .ptitle .box { margin-right: 6px; margin-top: -3px; }
.p-render { height: 85px; }
.p-dim { height: 227px; }
.p-aa { height: 82px; }
.p-out { height: 178px; }
.p-bake { height: 48px; }
.pbody { padding: 9px 3px 0; }
.pbody .row { justify-content: stretch; }
.renderops { grid-template-columns: 77px 78px 1fr; }
.row.renderops > div { justify-content: flex-start; padding-left: 2px; line-height: 20px; }
.renderops .ic { flex: none; }
.renderops span { flex: 1; text-align: center; }
.display { display: grid; grid-template-columns: 84px 155px; margin-top: 5px; }
.presets { grid-template-columns: 197px 19px 1fr; }
.cols { display: grid; grid-template-columns: 115px 116px; column-gap: 8px; }
.cols .lbl { padding-left: 7px; }
.cols > div + div .lbl { padding-left: 8px; }
.chkpair { display: grid; grid-template-columns: 61px 1fr; padding: 5px 0 0 3px; }
.samples { grid-template-columns: 26px 27px 27px 1fr; line-height: 20px; }
.fs { margin: 5px 0 0 3px; }
.size { margin-top: 2px; }
.path { grid-template-columns: 217px 1fr; }
.row.path > .f { padding-left: 6px; }
.folder { width: 18px; height: 16px; }
.checks { margin-top: 8px; padding-left: 3px; }
.ph { margin: 8px 0 0 3px; }
.fmt { margin-top: 8px; }
.image { width: 13px; height: 15px; margin: -2px 5px 0 -2px; }
.modes, .depth .row { line-height: 20px; }
.modes { grid-template-columns: 36px 37px 1fr; }
.depth { display: grid; grid-template-columns: 85px 154px; margin-top: 2px; }
.depth .row { grid-template-columns: 75px 1fr; }
.comp { margin-top: 2px; }
```
FILE: script.js
```js
const NS = 'http://www.w3.org/2000/svg';

function add(parent, tag, attrs, text) {
  const el = document.createElementNS(NS, tag);
  for (const k in attrs) el.setAttribute(k, attrs[k]);
  if (text !== undefined) el.textContent = text;
  parent.appendChild(el);
  return el;
}

/* 3D viewport: grid, axes, lathe mesh, transform manipulator */
function drawViewport() {
  const svg = document.getElementById('viewport');
  const cx = 968.7;
  const crisp = { 'shape-rendering': 'crispEdges' };
  const grid = add(svg, 'g', { ...crisp, stroke: '#404040' });
  const step = 34.08;
  for (let i = -22; i <= 22; i++) {
    const x = Math.round(969.3 + i * step) + 0.5;
    if (x > 216 && x < 1722) add(grid, 'path', { d: `M${x} 87V968` });
  }
  for (let i = -12; i <= 12; i++) {
    const y = Math.round(527.3 + i * step) + 0.5;
    add(grid, 'path', { d: `M216 ${y}H1722` });
  }
  add(svg, 'path', { ...crisp, d: 'M216 527.5H1722', stroke: '#8c1414' });

  const outer = [[329.7, 187.5], [108, 356.5], [88.2, 526.5], [91.6, 696.5], [250.4, 867.5]];
  const inner = [[296.4, 185.5], [89.3, 355.5], [64, 527.5], [64.8, 696.5], [184.8, 848.5]];
  const outline = p => 'M' + p.map(([r, y]) => `${cx - r} ${y}`).join('L') + 'L' +
    p.slice().reverse().map(([r, y]) => `${cx + r} ${y}`).join('L') + 'Z';
  add(svg, 'path', { d: outline(outer), fill: '#000', opacity: 0.14 });
  add(svg, 'path', { d: outline(inner), fill: '#000', opacity: 0.12 });
  add(svg, 'path', { ...crisp, d: 'M969.5 87V968', stroke: '#1f1f86' });

  const cos = [];
  for (let k = 0; k <= 16; k++) cos.push(Math.cos(k * Math.PI / 16));
  const edges = add(svg, 'g', { ...crisp, stroke: '#000', fill: 'none' });
  const verts = add(svg, 'g', { ...crisp, fill: '#000' });
  for (const rings of [outer, inner]) {
    for (const c of cos) {
      add(edges, 'path', { d: 'M' + rings.map(([r, y]) => `${(cx + r * c).toFixed(1)} ${y}`).join('L') });
      for (const [r, y] of rings) {
        add(verts, 'rect', { x: Math.round(cx + r * c - 1.5), y: Math.round(y - 1.5), width: 3, height: 3 });
      }
    }
    for (const [r, y] of rings) {
      if (y !== 848.5) add(edges, 'path', { d: `M${cx - r} ${y}H${cx + r}` });
    }
  }
  for (const c of cos) {
    add(edges, 'path', { d: `M${cx + 329.7 * c} 187.5L${cx + 296.4 * c} 185.5` });
  }

  const defs = add(svg, 'defs', {});
  const grad = add(defs, 'linearGradient', { id: 'selFade', gradientUnits: 'userSpaceOnUse', x1: 784, x2: 1154, y1: 0, y2: 0 });
  [[0, '#000'], [0.12, '#1a1204'], [0.3, '#7a4c0e'], [0.5, '#ff9a1e'], [0.75, '#5a3a08'], [0.88, '#1a1204'], [1, '#000']]
    .forEach(([offset, color]) => add(grad, 'stop', { offset, 'stop-color': color }));
  add(svg, 'rect', { x: 784, y: 848, width: 370, height: 1, fill: 'url(#selFade)' });

  add(svg, 'rect', { x: 966.5, y: 524.5, width: 5, height: 6, fill: '#c98a35', stroke: '#000' });
  add(svg, 'path', { d: 'M969 833V782', stroke: '#0000e0', 'stroke-width': 2 });
  add(svg, 'path', { d: 'M969 765.500L974 783H964Z', fill: '#0000e6' });
  add(svg, 'path', { d: 'M984 848.500H1036', stroke: '#d80000', 'stroke-width': 1.5 });
  add(svg, 'path', { d: 'M1052 848.500L1035 853V844Z', fill: '#e60000' });
  add(svg, 'circle', { cx: 969, cy: 848.5, r: 14.8, fill: 'none', stroke: '#fff', 'stroke-width': 1.2 });
  add(svg, 'rect', { x: 967.500, y: 847, width: 3, height: 3, fill: '#ff8500' });

  add(svg, 'path', { ...crisp, d: 'M242 917V942', stroke: '#0a0ab8', 'stroke-width': 2 });
  add(svg, 'path', { ...crisp, d: 'M242 942H267', stroke: '#b80a0a', 'stroke-width': 2 });
  add(svg, 'text', { x: 244, y: 916, fill: '#1414b4', 'font-size': 11 }, 'z');
  add(svg, 'text', { x: 269, y: 941, fill: '#b41414', 'font-size': 11 }, 'x');
  add(svg, 'text', { x: 236, y: 108, fill: '#fff' }, 'Front Ortho');
  add(svg, 'text', { x: 286, y: 958, fill: '#fff' }, '(1) Cylinder');
}

/* Timeline: frame range, ticks, scroller with frame numbers, current frame */
function drawTimeline() {
  const svg = document.getElementById('timeline');
  const zero = 339.8;
  const perFrame = 4.883;
  const defs = add(svg, 'defs', {});
  const grad = add(defs, 'linearGradient', { id: 'scroller', x1: 0, x2: 0, y1: 0, y2: 1 });
  add(grad, 'stop', { offset: 0, 'stop-color': '#939393' });
  add(grad, 'stop', { offset: 1, 'stop-color': '#7b7b7b' });
  add(svg, 'rect', { x: 56, y: 995, width: 1666, height: 67, fill: '#727272' });
  add(svg, 'rect', { x: 56, y: 995, width: 284, height: 50, fill: '#444' });
  add(svg, 'rect', { x: 1560, y: 995, width: 162, height: 50, fill: '#444' });
  add(svg, 'rect', { x: 56, y: 995, width: 1666, height: 1, fill: '#808080', opacity: 0.6 });
  for (let f = -55; f <= 280; f += 5) {
    const x = Math.floor(zero + f * perFrame) + 0.5;
    const major = f % 10 === 0;
    const dim = f <= 0 || f >= 250;
    const stroke = major ? (dim ? '#373737' : '#5d5d5d') : (dim ? '#3e3e3e' : '#696969');
    add(svg, 'path', { d: `M${x} 996V1045`, stroke, 'shape-rendering': 'crispEdges' });
  }
  add(svg, 'rect', { x: 343, y: 995, width: 3, height: 50, fill: '#5fc33c' });
  add(svg, 'rect', { x: 61.5, y: 1046.5, width: 1655, height: 12, rx: 6, fill: 'url(#scroller)', stroke: '#404040' });
  add(svg, 'circle', { cx: 67.5, cy: 1052.5, r: 4, fill: '#5a5a5a' });
  add(svg, 'circle', { cx: 1710.500, cy: 1052.5, r: 4, fill: '#5a5a5a' });
  for (let f = -50; f <= 280; f += 10) {
    const x = 341.3 + f * 4.852 - (f < 0 ? 2.6 : 0);
    add(svg, 'text', { x, y: 1056.5, 'text-anchor': 'middle', fill: '#0a0a0a', 'letter-spacing': 0.2 }, f);
  }
}

drawViewport();
drawTimeline();
```
